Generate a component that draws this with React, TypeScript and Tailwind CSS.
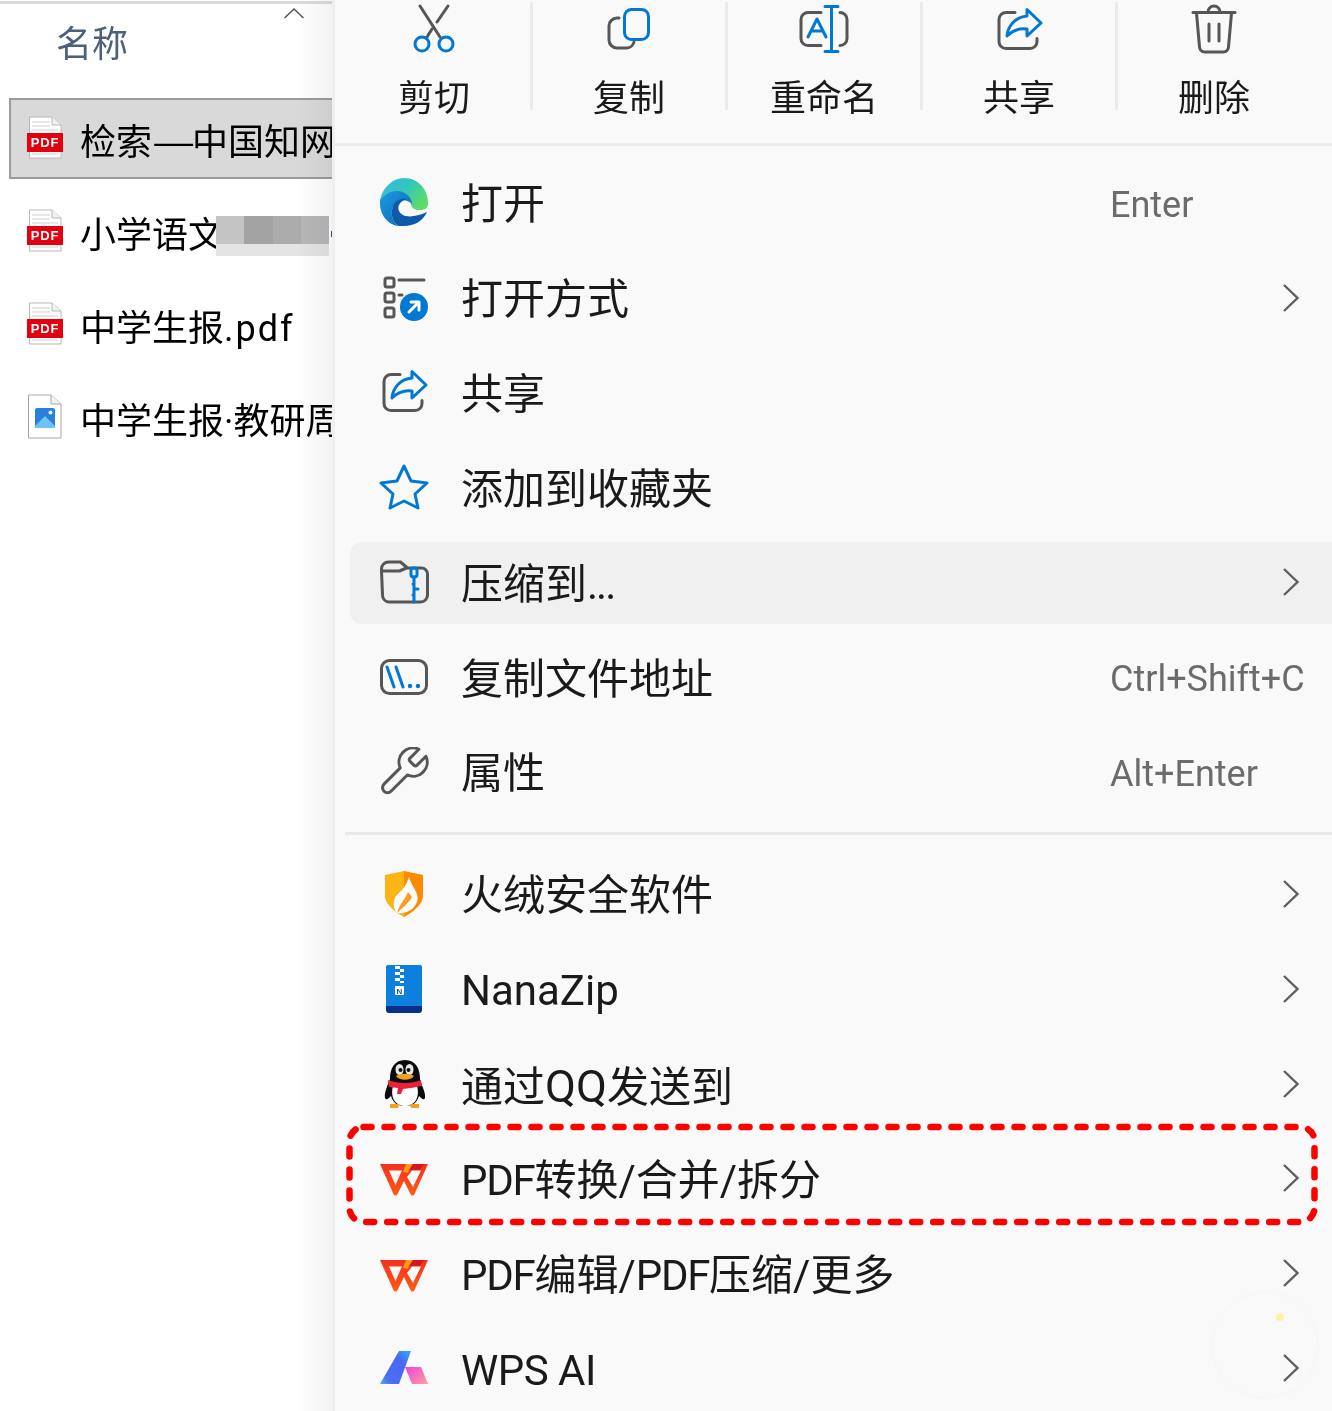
import React from "react";

const GRAY = "#565656";
const BLUE = "#0078d4";

function Box({ x = 378, y, size = 52, children }: { x?: number; y: number; size?: number; children: React.ReactNode }) {
  return (
    <svg width={size} height={size} viewBox={`${x} ${y} ${size} ${size}`} fill="none" strokeLinecap="round" strokeLinejoin="round" className="shrink-0 block">
      {children}
    </svg>
  );
}

const G = { stroke: GRAY, strokeWidth: 3 };
const B = { stroke: BLUE, strokeWidth: 3 };

function SharePaths() {
  return (
    <>
      <path d="M1015 12.5h-9a7 7 0 0 0-7 7v22a7 7 0 0 0 7 7h24a7 7 0 0 0 7-7v-3" {...G} />
      <path d="M1027 9.5 1041 23 1027 36V29C1019 28 1013 30 1007 36 1008 25 1016 17 1027 16Z" {...B} />
    </>
  );
}

const toolbar = [
  {
    label: "剪切",
    icon: (
      <Box x={408} y={2}>
        <path d="M420 6 440 37" {...G} />
        <path d="M448 6 437 22M432 29 427 37" {...G} />
        <circle cx="422" cy="44" r="7" {...B} />
        <circle cx="446" cy="44" r="7" {...B} />
      </Box>
    ),
  },
  {
    label: "复制",
    icon: (
      <Box x={603} y={2}>
        <path d="M619 18h-2a8 8 0 0 0-8 8v14a8 8 0 0 0 8 8h9a8 8 0 0 0 8-6" {...G} />
        <rect x="624.5" y="9.5" width="24" height="30" rx="7" {...B} />
      </Box>
    ),
  },
  {
    label: "重命名",
    icon: (
      <Box x={798} y={2}>
        <path d="M821 12.5h-13a7 7 0 0 0-7 7v19a7 7 0 0 0 7 7h13M840 12.5a7 7 0 0 1 7 7v19a7 7 0 0 1-7 7" {...G} />
        <path d="M808 37 817 19 826 37M811 31h12" {...B} />
        <path d="M825 6.500h13M831.500 6.500v45M825 51.500h13" {...B} />
      </Box>
    ),
  },
  {
    label: "共享",
    icon: (
      <Box x={993} y={2}>
        <SharePaths />
      </Box>
    ),
  },
  {
    label: "删除",
    icon: (
      <Box x={1188} y={2}>
        <path d="M1193 12.500h42" {...G} />
        <path d="M1208 12a6 6 0 0 1 12 0" {...G} />
        <path d="M1196.500 13 1199.500 47a5 5 0 0 0 5 5h19a5 5 0 0 0 5-5L1231.500 13" {...G} />
        <path d="M1209 24v17M1219 24v17" {...G} />
      </Box>
    ),
  },
];

function Chevron() {
  return (
    <svg width="18" height="30" viewBox="0 0 18 30" fill="none" className="block">
      <path d="M2 2 15.500 15 2 28" stroke="#5f5f5f" strokeWidth="2.4" />
    </svg>
  );
}

const EdgeIcon = (
  <Box y={178}>
    <defs>
      <linearGradient id="e1" x1="0" y1="0" x2="1" y2="0.6">
        <stop offset="0" stopColor="#41b6e6" />
        <stop offset="0.5" stopColor="#2fc6c0" />
        <stop offset="1" stopColor="#5ddc6a" />
      </linearGradient>
      <linearGradient id="e2" x1="0" y1="0" x2="1" y2="1">
        <stop offset="0" stopColor="#1c9be2" />
        <stop offset="1" stopColor="#0d63b4" />
      </linearGradient>
    </defs>
    <path d="M380 200C383 187 393 178 404 178 418 178 428 189 428 203 428 208 425 210 420 210 415 210 412 208 411 205 411 197 405 192 396 192 389 192 383 195 380 200Z" fill="url(#e1)" />
    <path d="M380 200C383 195 390 191 397 191 405 191 412 197 412 204 405 197 394 200 392 210 391 218 394 224 399 226 388 225 379 215 380 200Z" fill="url(#e2)" />
    <path d="M399 226C394 224 391 218 392 210 393 200 403 197 407 199 400 201 397 206 399 211 402 218 414 218 427 212 423 221 414 226 404 226Z" fill="#0e5aa8" />
  </Box>
);

const OpenWithIcon = (
  <Box y={273}>
    <rect x="385" y="278" width="9" height="9" rx="2" {...G} />
    <rect x="385" y="293" width="9" height="9" rx="2" {...G} />
    <rect x="385" y="308" width="9" height="9" rx="2" {...G} />
    <path d="M399 280h25M399 295h3" {...G} />
    <circle cx="414" cy="307" r="14" fill={BLUE} />
    <path d="M409 312 419 302M411 302h8v8" stroke="#fff" strokeWidth="3" />
  </Box>
);

const ShareRowIcon = (
  <Box x={995 - 616 - 2} y={368}>
    <g transform="translate(-616 362)">
      <SharePaths />
    </g>
  </Box>
);

const StarIcon = (
  <Box y={462}>
    <path d="M404 466 411 481 427 483 415 494 418 508 404 501 390 508 393 494 381 483 397 481Z" {...B} />
  </Box>
);

const ZipIcon = (
  <Box y={557}>
    <path d="M381.500 571v-2a7 7 0 0 1 7-7h12l7 6h14a6 6 0 0 1 6 6v21a7 7 0 0 1-7 7h-32a7 7 0 0 1-6-7Z" {...G} />
    <path d="M381.500 571h18l7-3" {...G} />
    <rect x="411" y="568" width="6" height="9" rx="2.500" {...B} />
    <path d="M414 577v25M414 584h-1M414 589h4M414 595h-1" {...B} />
  </Box>
);

const PathIcon = (
  <Box y={652}>
    <rect x="381.500" y="660.500" width="45" height="33" rx="8" {...G} />
    <path d="M387 667 394 687M396 667 403 687" {...B} />
    <circle cx="410" cy="686" r="2.200" fill={BLUE} />
    <circle cx="418" cy="686" r="2.200" fill={BLUE} />
  </Box>
);

const WrenchIcon = (
  <Box y={747}>
    <g transform="translate(375.500 743.300) scale(2.35)">
      <path
        d="M14.700 6.300a1 1 0 0 0 0 1.400l1.600 1.600a1 1 0 0 0 1.400 0l3.770-3.770a6 6 0 0 1-7.940 7.940l-6.910 6.910a2.120 2.120 0 0 1-3-3l6.910-6.910a6 6 0 0 1 7.940-7.940l-3.760 3.760z"
        stroke={GRAY}
        strokeWidth="1.280"
      />
    </g>
  </Box>
);

const ShieldIcon = (
  <Box y={869}>
    <path d="M404 871 385 875 385 897C386 905 396 913 404 917Z" fill="#fdb515" />
    <path d="M404 871 423 875 423 897C422 905 412 913 404 917Z" fill="#ff8a00" />
    <path d="M409 877C412 888 420 893 417 902 414 910 406 914 397 913 391 905 394 897 399 893 404 889 407 883 409 877Z" fill="#fff" />
    <path d="M408 892C405 900 400 903 397 913 402 908 408 904 412 897Z" fill="#ff9a1a" />
  </Box>
);

const NanaIcon = (
  <Box y={964}>
    <rect x="386" y="965" width="36" height="48" rx="3" fill="#0a2f88" />
    <path d="M386 968a3 3 0 0 1 3-3h30a3 3 0 0 1 3 3v38h-36Z" fill="#0d7fdd" />
    <path d="M395 966h5v3h-5ZM400 969h4v3h-4ZM395 972h5v3h-5ZM400 975h4v3h-4ZM395 978h5v3h-5ZM400 981h4v2h-4Z" fill="#fff" />
    <rect x="395" y="986" width="9" height="9" rx="1" fill="#fff" />
    <text x="399.500" y="993.500" textAnchor="middle" fontSize="8" fontWeight="700" fill="#0d5fb0" fontFamily="Liberation Sans">N</text>
  </Box>
);

const QQIcon = (
  <Box y={1059}>
    <path d="M405 1060C394 1060 390 1069 390 1079 388 1085 384 1092 385 1098 386 1101 389 1098 391 1096 393 1102 396 1106 405 1106 414 1106 417 1102 419 1096 421 1098 424 1101 425 1098 426 1092 421 1085 420 1079 420 1069 416 1060 405 1060Z" fill="#0b0b0b" />
    <path d="M393 1086C390 1097 395 1106 405 1106 415 1106 420 1097 417 1086Z" fill="#fff" />
    <ellipse cx="399.500" cy="1069.500" rx="4" ry="5.500" fill="#e8e8e8" />
    <ellipse cx="409.500" cy="1069.500" rx="4" ry="5.500" fill="#e8e8e8" />
    <circle cx="400.500" cy="1070" r="2" fill="#111" />
    <circle cx="408.500" cy="1070" r="2" fill="#111" />
    <path d="M396 1076C401 1073 409 1073 414 1076 411 1081 399 1081 396 1076Z" fill="#f5a21a" />
    <path d="M388 1080C398 1084 412 1084 421 1080L422 1086 411 1088 403 1089 401 1094 397 1094 398 1088 389 1087Z" fill="#e8203a" />
    <path d="M390 1104 399 1104 398 1108H390ZM410 1104 419 1104V1108H411Z" fill="#f5a21a" />
  </Box>
);

function WpsIcon({ y, dy, id }: { y: number; dy: number; id: string }) {
  return (
    <Box y={y}>
      <defs>
        <linearGradient id={id} x1="0" y1="0" x2="0" y2="1">
          <stop offset="0" stopColor="#f4301e" />
          <stop offset="1" stopColor="#ff5a14" />
        </linearGradient>
      </defs>
      <g transform={`translate(0 ${dy})`}>
        <path
          d="M380 1165H428L414.500 1195Q412.500 1198 410.500 1195L404 1182 397.500 1195Q395.500 1198 393.500 1195ZM389 1171.500 395.500 1186 402 1171.500ZM412 1171.500 407 1178 413 1188 421 1171.500Z"
          fill={`url(#${id})`}
          fillRule="evenodd"
        />
        <path d="M406 1165H413L407.500 1174 403 1173Z" fill="#ff9a1a" />
        <path d="M413 1165H424L420 1171H409Z" fill="#d8141c" />
      </g>
    </Box>
  );
}

const AiIcon = (
  <Box y={1343}>
    <defs>
      <linearGradient id="ai1" x1="1" y1="0" x2="0" y2="1">
        <stop offset="0" stopColor="#2fb5f5" />
        <stop offset="0.3" stopColor="#4a66f5" />
        <stop offset="0.8" stopColor="#4a70f0" />
        <stop offset="1" stopColor="#4fb0f0" />
      </linearGradient>
      <linearGradient id="ai2" x1="0" y1="0" x2="1" y2="1">
        <stop offset="0" stopColor="#f040e0" />
        <stop offset="1" stopColor="#ffa09a" />
      </linearGradient>
    </defs>
    <path d="M399 1351H411L399 1384H380Z" fill="url(#ai1)" />
    <path d="M405 1367H421L428 1384H412Z" fill="url(#ai2)" />
  </Box>
);

type Row = { id: string; icon: React.ReactNode; label: React.ReactNode; shortcut?: string; arrow?: boolean; active?: boolean };

const Pdf = () => <span className="tracking-[-1.3px]">PDF</span>;

const rowsA: Row[] = [
  { id: "a1", icon: EdgeIcon, label: "打开", shortcut: "Enter" },
  { id: "a2", icon: OpenWithIcon, label: "打开方式", arrow: true },
  { id: "a3", icon: ShareRowIcon, label: "共享" },
  { id: "a4", icon: StarIcon, label: "添加到收藏夹" },
  { id: "a5", icon: ZipIcon, label: <>压缩到<span className="tracking-[-2px]">...</span></>, arrow: true, active: true },
  { id: "a6", icon: PathIcon, label: "复制文件地址", shortcut: "Ctrl+Shift+C" },
  { id: "a7", icon: WrenchIcon, label: "属性", shortcut: "Alt+Enter" },
];

const rowsB: Row[] = [
  { id: "b1", icon: ShieldIcon, label: "火绒安全软件", arrow: true },
  { id: "b2", icon: NanaIcon, label: "NanaZip", arrow: true },
  { id: "b3", icon: QQIcon, label: <>通过<span className="text-[45px]">QQ</span>发送到</>, arrow: true },
  { id: "b4", icon: <WpsIcon y={1154} dy={0} id="w1" />, label: <><Pdf />转换/合并/拆分</>, arrow: true },
  { id: "b5", icon: <WpsIcon y={1248} dy={95} id="w2" />, label: <><Pdf />编辑/<Pdf />压缩/更多</>, arrow: true },
  { id: "b6", icon: AiIcon, label: <span className="tracking-[-0.5px]">WPS AI</span>, arrow: true },
];

function MenuRow({ icon, label, shortcut, arrow, active }: Row) {
  return (
    <div className="h-[94.83px] py-[6.4px]">
      <div className={`h-[82px] ml-[15px] pl-[28px] flex items-center rounded-l-[12px] ${active ? "bg-[#f0f0f0]" : ""}`}>
        {icon}
        <div className="ml-[31px] pt-[3px] flex-1 whitespace-nowrap text-[42px] leading-none text-[#1a1a1a]">{label}</div>
        <div className="w-[222px] shrink-0 flex items-center">
          {shortcut && <span className="pt-[2px] whitespace-nowrap text-[36px] leading-none text-[#6b6b6b]">{shortcut}</span>}
          {arrow && (
            <span className="ml-[172px] mb-[2px] block">
              <Chevron />
            </span>
          )}
        </div>
      </div>
    </div>
  );
}

function PdfIcon() {
  return (
    <svg width="38" height="44" viewBox="0 0 38 44" fill="none" className="block shrink-0 mb-[2px]">
      <path d="M3.500 1H26L35 9V42H3.500Z" fill="#fff" stroke="#b8b8b8" />
      <path d="M26 1V9H35" stroke="#b8b8b8" fill="#f2f2f2" />
      <path d="M6 6H24M6 10H24M6 14H32" stroke="#cfcfcf" />
      <path d="M6 38H32" stroke="#cfcfcf" />
      <rect x="1" y="17" width="36" height="19" fill="#e3000f" />
      <text x="19" y="31" textAnchor="middle" fontSize="13" fontWeight="700" fill="#fff" fontFamily="Liberation Sans" letterSpacing="0.8">PDF</text>
    </svg>
  );
}

function ImgIcon() {
  return (
    <svg width="38" height="46" viewBox="0 0 38 46" fill="none" className="block shrink-0 mb-[2px]">
      <path d="M2.500 1H25L35 10V44H2.500Z" fill="#fff" stroke="#a8a8a8" />
      <path d="M25 1V10H35" stroke="#a8a8a8" fill="#f2f2f2" />
      <rect x="9" y="14" width="20" height="20" rx="2" fill="#2a7fd8" />
      <path d="M9 32 19 22 29 32V34H9Z" fill="#6cc4f5" />
      <circle cx="24.500" cy="18.500" r="2" fill="#e8f4ff" />
    </svg>
  );
}

function FileRow({ icon, name, selected, children }: { icon: React.ReactNode; name: React.ReactNode; selected?: boolean; children?: React.ReactNode }) {
  return (
    <div className="h-[93px] relative">
      <div
        className={`h-[81px] pl-[15px] flex items-center border-2 border-r-0 ${selected ? "bg-[#d9d9d9] border-[#9b9b9b]" : "border-transparent"}`}
      >
        {icon}
        <span className={`ml-[16px] whitespace-nowrap text-[36px] leading-none text-black ${selected ? "pt-[1px] font-['Noto_Sans_CJK_SC',sans-serif]" : "pt-[8px]"}`}>{name}</span>
      </div>
      {children}
    </div>
  );
}

export default function App() {
  return (
    <div className="relative w-[1332px] h-[1411px] overflow-hidden flex bg-white font-['Roboto','Noto_Sans_CJK_SC',sans-serif]">
      {/* file list */}
      <div className="relative w-[332px] shrink-0 overflow-hidden">
        <div className="h-[3px] mt-px bg-[#dcdcdc]" />
        <div className="relative h-[94px] pl-[56px] pt-[16px]">
          <span className="text-[36px] leading-[50px] text-[#4c607a]">名称</span>
          <svg width="20" height="11" viewBox="0 0 20 11" fill="none" className="absolute left-[284px] top-[4px]">
            <path d="M0.500 10 10 1 19.500 10" stroke="#555" strokeWidth="1.500" />
          </svg>
        </div>
        <div className="pl-[9px]">
          <FileRow icon={<PdfIcon />} name={<>检索<span className="inline-block w-[40px] origin-left scale-x-[1.35]">—</span>中国知网</>} selected />
          <FileRow icon={<PdfIcon />} name="小学语文">
            <div className="absolute left-[207px] top-[25px] w-[113px] h-[40px] flex flex-col">
              <div className="flex h-[28px]">
                <div className="flex-1 bg-[#c4c4c4]" />
                <div className="flex-1 bg-[#a3a3a3]" />
                <div className="flex-1 bg-[#acacac]" />
                <div className="flex-1 bg-[#b7b7b7]" />
              </div>
              <div className="h-[12px] bg-[#e4e4e4]" />
            </div>
            <div className="absolute left-[322px] top-[40px] w-px h-[6px] bg-[#33507a]" />
          </FileRow>
          <FileRow icon={<PdfIcon />} name={<>中学生报<span className="tracking-[2px]">.pdf</span></>} />
          <FileRow icon={<ImgIcon />} name="中学生报·教研周刊" />
        </div>
        <div className="absolute right-0 top-0 bottom-0 w-[36px] bg-gradient-to-r from-white to-[#f3f3f3] mix-blend-multiply" />
      </div>

      {/* context menu */}
      <div className="flex-1 min-w-0 bg-[#f9f9f9] border-l-[3px] border-[#efefef]">
        <div className="h-[146px] border-b-[3px] border-[#ebebeb] flex pl-[3px] pt-[2px]">
          {toolbar.map((t, i) => (
            <div key={t.label} className={`h-[108px] flex flex-col items-center ${i < 4 ? "w-[195px] border-r-[3px] border-[#ebebeb]" : "w-[192px]"}`}>
              {t.icon}
              <span className="mt-[20px] text-[36px] leading-[50px] text-[#1a1a1a] whitespace-nowrap">{t.label}</span>
            </div>
          ))}
        </div>
        <div className="pt-[10.5px]">
          {rowsA.map((r) => (
            <MenuRow key={r.id} {...r} />
          ))}
        </div>
        <div className="mt-[11.6px] mb-[12.7px] ml-[10px] h-[3px] bg-[#e8e8e8]" />
        <div>
          {rowsB.map((r) => (
            <MenuRow key={r.id} {...r} />
          ))}
        </div>
      </div>

      {/* red annotation */}
      <svg className="absolute left-[340px] top-[1115px] pointer-events-none" width="985" height="120" viewBox="340 1115 985 120" fill="none">
        <rect x="349.500" y="1127" width="965" height="95" rx="14" stroke="#ff0000" strokeWidth="6.500" strokeLinecap="round" strokeDasharray="8 13" />
      </svg>
      {/* faint watermark */}
      <svg className="absolute left-[1205px] top-[1285px] pointer-events-none" width="120" height="120" viewBox="1205 1285 120 120" fill="none">
        <circle cx="1265" cy="1345" r="53" stroke="#f6f6f6" />
        <circle cx="1280" cy="1317" r="4" fill="#fdf0a8" />
      </svg>
    </div>
  );
}
